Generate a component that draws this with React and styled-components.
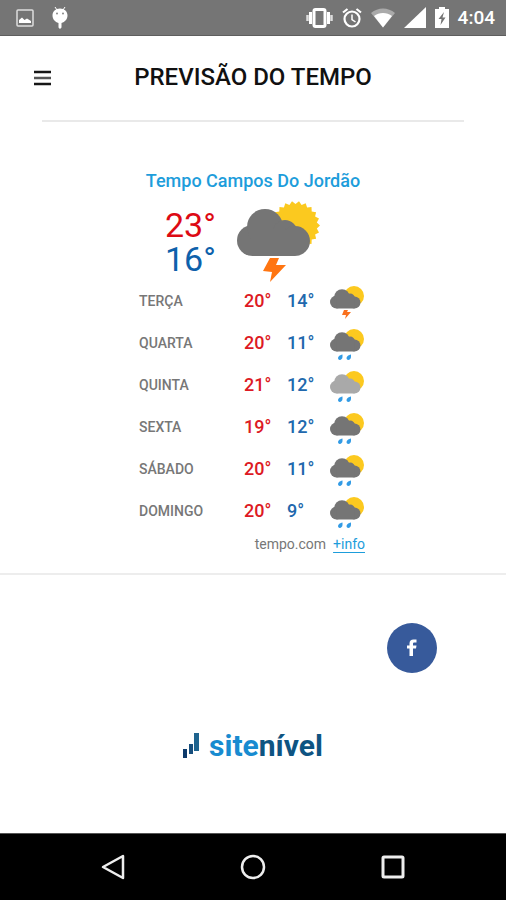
import React from "react";
import styled, { createGlobalStyle } from "styled-components";

const GlobalStyle = createGlobalStyle`
  * {
    box-sizing: border-box;
  }

  body {
    margin: 0;
    background: #fff;
    font-family: Roboto, "Liberation Sans", sans-serif;
  }
`;

const Page = styled.div`
  display: flex;
  flex-direction: column;
  min-height: 100vh;
`;

const StatusBar = styled.div`
  display: flex;
  align-items: center;
  justify-content: space-between;
  height: 36px;
  padding: 0 11px 0 16px;
  background: #757575;
  border-bottom: 1px solid #5e5e5e;
  color: #fff;
`;

const StatusGroup = styled.div`
  display: flex;
  align-items: center;
  gap: ${(props) => props.$gap}px;

  svg {
    display: block;
  }
`;

const Clock = styled.span`
  font-size: 19px;
  line-height: 24px;
  font-weight: 500;
`;

const Header = styled.header`
  display: grid;
  grid-template-columns: 24px 1fr 24px;
  align-items: center;
  height: 86px;
  margin: 0 42px;
  border-bottom: 2px solid #e9e9e9;
`;

const MenuButton = styled.button`
  margin: 0;
  margin-left: -8px;
  padding: 0;
  border: 0;
  background: none;
  cursor: pointer;

  svg {
    display: block;
  }
`;

const Title = styled.h1`
  margin: 0;
  padding-bottom: 2px;
  font-size: 24px;
  line-height: 28px;
  font-weight: 500;
  text-align: center;
  color: #111;
`;

const Weather = styled.main`
  display: flex;
  flex-direction: column;
  align-items: center;
  padding: 48px 0 20px;
  border-bottom: 2px solid #ededed;
`;

const Widget = styled.section`
  width: 228px;
`;

const City = styled.a`
  display: block;
  font-size: 18px;
  line-height: 22px;
  font-weight: 500;
  text-align: center;
  text-decoration: none;
  white-space: nowrap;
  color: #1d9ddb;
`;

const Today = styled.div`
  display: flex;
  gap: 20px;
  height: 88px;
  padding: 8px 0 0 26px;
`;

const TodayTemps = styled.div`
  width: 52px;
  padding-top: 8px;
  font-size: 34px;
  line-height: 34px;
`;

const Temp = styled.div`
  color: ${(props) => (props.$max ? "#dd0a14" : "#0d61ab")};
`;

const Days = styled.table`
  width: 100%;
  table-layout: fixed;
  border-collapse: collapse;
`;

const DayName = styled.th`
  width: 105px;
  height: 42px;
  padding: 0;
  font-size: 14px;
  line-height: 18px;
  font-weight: 500;
  text-align: left;
  color: #777;
`;

const DayTemp = styled.td`
  width: 43px;
  padding: 0;
  font-size: 18px;
  line-height: 18px;
  font-weight: 500;
  color: ${(props) => (props.$max ? "#dd1a24" : "#2168ad")};
`;

const DayIcon = styled.td`
  padding: 0;

  svg {
    display: block;
  }
`;

const Source = styled.p`
  display: flex;
  justify-content: flex-end;
  gap: 7px;
  margin: 0;
  padding: 3px 2px 0 0;
  font-size: 14px;
  line-height: 18px;
  color: #777;

  a {
    color: #1d9ddb;
    text-decoration: underline;
    text-underline-offset: 3px;
  }
`;

const Footer = styled.footer`
  display: flex;
  flex-direction: column;
  align-items: center;
  flex: 1;
  padding: 48px 69px 40px;
`;

const Social = styled.a`
  display: flex;
  align-items: center;
  justify-content: center;
  align-self: flex-end;
  width: 50px;
  height: 50px;
  border-radius: 50%;
  background: #375a9b;
`;

const Brand = styled.a`
  display: flex;
  align-items: center;
  gap: 10px;
  margin-top: 53px;
  font-size: 30px;
  line-height: 40px;
  font-weight: 700;
  text-decoration: none;
  color: #0e5482;
`;

const BrandStart = styled.span`
  color: #188bd0;
`;

const NavBar = styled.nav`
  display: flex;
  justify-content: center;
  gap: 112px;
  height: 67px;
  border-top: 1px solid #555;
  background: #000;
`;

const NavButton = styled.button`
  display: flex;
  align-items: center;
  justify-content: center;
  width: 28px;
  padding: 0;
  border: 0;
  background: none;
  cursor: pointer;
`;

// sun with a toothed edge, used by the large icon
const teeth = Array.from({ length: 44 }, (_, i) => {
  const radius = i % 2 ? 21.5 : 24.5;
  const angle = (i * Math.PI) / 22;
  const x = 58.5 + radius * Math.cos(angle);
  const y = 25.5 + radius * Math.sin(angle);
  return `${x.toFixed(1)},${y.toFixed(1)}`;
}).join(" ");

const StormLarge = () => (
  <svg width="84" height="84" viewBox="0 0 84 84" aria-hidden="true">
    <polygon points={teeth} fill="#fbc91f" />
    <g fill="#757575">
      <circle cx="15.5" cy="40.5" r="15.5" />
      <circle cx="28" cy="27" r="18" />
      <circle cx="48" cy="32" r="12" />
      <circle cx="58" cy="41" r="15" />
      <rect x="15" y="30" width="43" height="26" />
    </g>
    <polygon points="33,58 42,58 39,65 49,65 33,82 35,72 26,71" fill="#ff7511" />
  </svg>
);

const SmallIcon = ({ type }) => {
  const storm = type === "storm";
  return (
    <svg width="36" height="40" viewBox="0 -3 36 40" aria-hidden="true">
      <g transform={storm ? "translate(0 -1)" : undefined}>
        <circle cx="24" cy="13" r="10" fill="#fcc91f" />
        <g fill={type === "light" ? "#a9a9a9" : "#757575"}>
          <circle cx="6.500" cy="19" r="6.500" />
          <circle cx="12" cy="14" r="7.800" />
          <circle cx="20" cy="15.500" r="5" />
          <circle cx="24.500" cy="19.500" r="6" />
          <rect x="6.500" y="15" width="18" height="10.500" />
        </g>
      </g>
      {storm ? (
        <polygon points="14,26 18,26 17,28 21,28 15,35 16,31 12,31" fill="#f9701d" />
      ) : (
        <g fill="#329be5">
          <path d="M12.500 28.500C9.500 29 7.500 31 8.200 33C9.500 35 12.500 33.500 12.500 31Z" />
          <path d="M21 28.500C18 29 16 31 16.700 33C18 35 21 33.500 21 31Z" />
        </g>
      )}
    </svg>
  );
};

const days = [
  { name: "TERÇA", max: 20, min: 14, type: "storm" },
  { name: "QUARTA", max: 20, min: 11, type: "rain" },
  { name: "QUINTA", max: 21, min: 12, type: "light" },
  { name: "SEXTA", max: 19, min: 12, type: "rain" },
  { name: "SÁBADO", max: 20, min: 11, type: "rain" },
  { name: "DOMINGO", max: 20, min: 9, type: "rain" },
];

const PhoneStatus = () => (
  <StatusBar>
    <StatusGroup $gap={18}>
      <svg width="18" height="18" viewBox="0 0 18 18">
        <rect x="1" y="1" width="16" height="16" rx="1" fill="none" stroke="#ddd" strokeWidth="1.500" />
        <path d="M3 14V11L6 8.500L8.500 11L11 9.500L15 12V14Z" fill="#fff" />
      </svg>
      <svg width="16" height="22" viewBox="0 0 16 22">
        <path d="M3 0L5 3M13 0L11 3" stroke="#fff" />
        <path
          d="M8 1.500C12.500 1.500 15.500 4.500 15.500 8.500C15.500 12 13 15 9.500 16V20.500L8 22L6.500 20.500V16C3 15 .5 12 .5 8.500C.5 4.500 3.500 1.500 8 1.500Z"
          fill="#fff"
        />
        <circle cx="5" cy="6.500" r="1" fill="#888" />
        <circle cx="11" cy="6.500" r="1" fill="#888" />
      </svg>
    </StatusGroup>
    <StatusGroup $gap={9}>
      <svg width="27" height="20" viewBox="0 0 27 20">
        <rect x="8" y="1.500" width="11" height="17" rx="1.500" fill="none" stroke="#fff" strokeWidth="3" />
        <path d="M4.500 4V16M22.500 4V16" stroke="#fff" strokeWidth="3" />
        <path d="M1.500 7V13M25.500 7V13" stroke="#ddd" strokeWidth="2.500" />
      </svg>
      <svg width="20" height="20" viewBox="0 0 20 20" fill="none" stroke="#fff">
        <circle cx="10" cy="11" r="7.500" strokeWidth="2.200" />
        <path d="M1 4.500L5.500 1M19 4.500L14.500 1" strokeWidth="2.200" />
        <path d="M10 6.500V11.500L13.500 14" strokeWidth="1.500" />
      </svg>
      <svg width="24" height="20" viewBox="0 0 24 20">
        <path d="M0 5C7-1 17-1 24 5L12 19.500Z" fill="#aaa" />
        <path d="M3 8C8 4 16 4 21 8L12 19.500Z" fill="#fff" />
      </svg>
      <svg width="22" height="21" viewBox="0 0 22 21">
        <path d="M22 0V21H0Z" fill="#fff" />
      </svg>
      <svg width="14" height="21" viewBox="0 0 14 21">
        <path d="M4 0H10V2H14V21H0V2H4Z" fill="#fff" />
        <path d="M9 5L3.500 12H6.500L5.500 18L10.500 10.500H7.500Z" fill="#757575" />
      </svg>
      <Clock>4:04</Clock>
    </StatusGroup>
  </StatusBar>
);

const App = () => {
  return (
    <Page>
      <GlobalStyle />
      <PhoneStatus />

      <Header>
        <MenuButton aria-label="Menu">
          <svg width="18" height="16" viewBox="0 0 18 16">
            <path d="M0 2H17M0 14H17" stroke="#161616" strokeWidth="2.500" />
            <path d="M0 8H17" stroke="#555" strokeWidth="2.500" />
          </svg>
        </MenuButton>
        <Title>PREVISÃO DO TEMPO</Title>
      </Header>

      <Weather>
        <Widget>
          <City href="#">Tempo Campos Do Jordão</City>
          <Today>
            <TodayTemps>
              <Temp $max>23°</Temp>
              <Temp>16°</Temp>
            </TodayTemps>
            <StormLarge />
          </Today>
          <Days>
            <tbody>
              {days.map((day) => (
                <tr key={day.name}>
                  <DayName scope="row">{day.name}</DayName>
                  <DayTemp $max>{day.max}°</DayTemp>
                  <DayTemp>{day.min}°</DayTemp>
                  <DayIcon>
                    <SmallIcon type={day.type} />
                  </DayIcon>
                </tr>
              ))}
            </tbody>
          </Days>
          <Source>
            tempo.com <a href="#">+info</a>
          </Source>
        </Widget>
      </Weather>

      <Footer>
        <Social href="#" aria-label="Facebook">
          <svg width="10" height="18" viewBox="0 0 10 18">
            <path
              d="M2.500 17V9.500H0V6.500H2.500V4.500C2.500 2 4 .5 6.500 .5H9.500V3.500H7.500C6.500 3.500 6 4 6 4.800V6.500H9.500L9 9.500H6V17Z"
              fill="#fff"
            />
          </svg>
        </Social>
        <Brand href="#">
          <svg width="16" height="26" viewBox="0 0 16 26">
            <rect x="0" y="16" width="4" height="9" fill="#0d3a6b" />
            <rect x="6" y="11" width="4" height="10" fill="#174f7d" />
            <rect x="11" y="0" width="5" height="18" fill="#1f648f" />
          </svg>
          <span>
            <BrandStart>site</BrandStart>nível
          </span>
        </Brand>
      </Footer>

      <NavBar>
        <NavButton aria-label="Voltar">
          <svg width="26" height="28" viewBox="0 0 26 28" fill="none" stroke="#eee" strokeWidth="2.500">
            <path d="M23 3V25L3 14Z" strokeLinejoin="round" />
          </svg>
        </NavButton>
        <NavButton aria-label="Início">
          <svg width="26" height="26" viewBox="0 0 26 26" fill="none" stroke="#eee" strokeWidth="2.500">
            <circle cx="13" cy="13" r="11" />
          </svg>
        </NavButton>
        <NavButton aria-label="Recentes">
          <svg width="24" height="24" viewBox="0 0 24 24" fill="none" stroke="#eee" strokeWidth="3">
            <rect x="2" y="2" width="20" height="20" rx="1" />
          </svg>
        </NavButton>
      </NavBar>
    </Page>
  );
};

export default App;
